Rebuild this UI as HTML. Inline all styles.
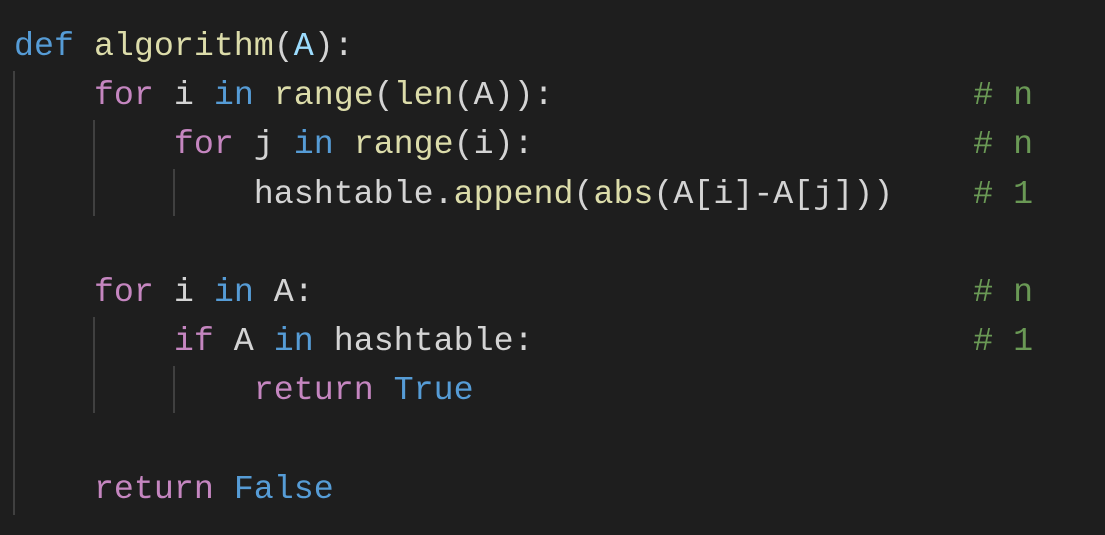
<!DOCTYPE html>
<html><head><meta charset="utf-8"><style>
html,body{margin:0;padding:0;background:#1e1e1e;width:1105px;height:535px;overflow:hidden}
pre{margin:0;position:absolute;left:14px;top:22px;font-family:"Liberation Mono",monospace;font-size:33.3px;line-height:49.2px;color:#d4d4d4}
.k{color:#569cd6}.f{color:#dcdcaa}.v{color:#9cdcfe}.p{color:#c586c0}.c{color:#6a9955}
.g{position:absolute;width:2px;background:#404040}
</style></head><body>
<div class="g" style="left:13px;top:71px;height:444px"></div>
<div class="g" style="left:93px;top:120px;height:96px"></div>
<div class="g" style="left:173px;top:169px;height:47px"></div>
<div class="g" style="left:93px;top:317px;height:96px"></div>
<div class="g" style="left:173px;top:366px;height:47px"></div>
<pre><span class="k">def</span> <span class="f">algorithm</span>(<span class="v">A</span>):
    <span class="p">for</span> i <span class="k">in</span> <span class="f">range</span>(<span class="f">len</span>(A)):                     <span class="c"># n</span>
        <span class="p">for</span> j <span class="k">in</span> <span class="f">range</span>(i):                      <span class="c"># n</span>
            hashtable.<span class="f">append</span>(<span class="f">abs</span>(A[i]-A[j]))    <span class="c"># 1</span>

    <span class="p">for</span> i <span class="k">in</span> A:                                 <span class="c"># n</span>
        <span class="p">if</span> A <span class="k">in</span> hashtable:                      <span class="c"># 1</span>
            <span class="p">return</span> <span class="k">True</span>

    <span class="p">return</span> <span class="k">False</span></pre>
</body></html>
